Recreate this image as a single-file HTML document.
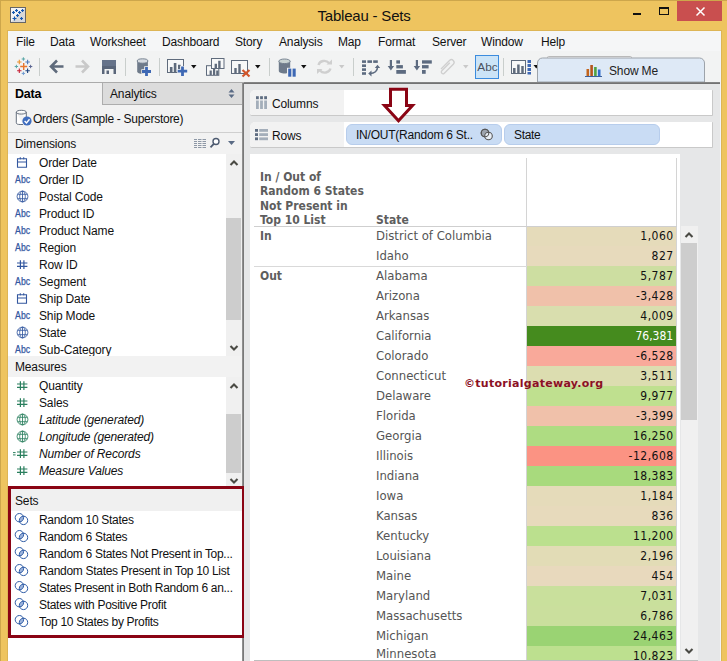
<!DOCTYPE html>
<html><head><meta charset="utf-8"><title>Tableau - Sets</title>
<style>
html,body{margin:0;padding:0;}
body{width:727px;height:661px;overflow:hidden;position:relative;background:#EEC45F;font-family:"Liberation Sans",sans-serif;font-size:12px;color:#1a1a1a;}
.abs,.abs *{position:absolute;}
div,span,svg{position:absolute;box-sizing:border-box;}
.t{white-space:nowrap;line-height:17px;height:17px;}
.ui{font-size:12px;color:#111;letter-spacing:-0.15px;}
.viz{font-family:"DejaVu Sans Condensed","Liberation Sans",sans-serif;}
</style></head>
<body>
<!-- window frame -->
<div id="frame" style="left:0;top:0;width:727px;height:661px;border-left:1px solid #CDA64B;border-top:1px solid #CDA64B;"></div>
<!-- title bar -->
<svg style="left:10px;top:7px" width="16" height="16" viewBox="0 0 16 16"><rect x="0.5" y="0.5" width="15" height="15" fill="#f4f4f4" stroke="#666"/><path d="M15 1 L15 15 L1 15 Z" fill="#d8d8d8"/><g stroke="#1558b0" stroke-width="1.2"><path d="M6.5 2v3M5 3.500h3M12.500 2v3M11 3.500h3M3.500 4v3M2 5.500h3M9.500 4v3M8 5.500h3M7.500 7v3M6 8.500h3M4.500 9.500v4M2.500 11.500h4M11.500 10v3M10 11.500h3"/></g></svg>
<span class="t" style="left:264px;top:7px;width:200px;text-align:center;font-size:15px;color:#111;letter-spacing:-0.2px;">Tableau - Sets</span>
<div style="left:633px;top:13px;width:8px;height:2px;background:#111"></div>
<div style="left:659px;top:7px;width:10px;height:8px;border:1px solid #111;border-top-width:2px"></div>
<div style="left:677px;top:1px;width:45px;height:20px;background:#C94F4F"></div>
<svg style="left:695px;top:6px" width="11" height="11" viewBox="0 0 11 11"><path d="M1.500 1.500L9.500 9.500M9.500 1.500L1.500 9.500" stroke="#fff" stroke-width="1.500"/></svg>

<!-- client area -->
<div id="client" style="left:7px;top:30px;width:715px;height:631px;background:#F2F4F8;border:1px solid #DDB556;border-bottom:none;"></div>
<!-- menu bar -->
<div id="menubar" style="left:8px;top:31px;width:712px;height:20px;background:#F5F6F7;"></div>
<span class="t ui" style="left:16px;top:34px">File</span>
<span class="t ui" style="left:50px;top:34px">Data</span>
<span class="t ui" style="left:90px;top:34px">Worksheet</span>
<span class="t ui" style="left:162px;top:34px">Dashboard</span>
<span class="t ui" style="left:235px;top:34px">Story</span>
<span class="t ui" style="left:279px;top:34px">Analysis</span>
<span class="t ui" style="left:338px;top:34px">Map</span>
<span class="t ui" style="left:378px;top:34px">Format</span>
<span class="t ui" style="left:432px;top:34px">Server</span>
<span class="t ui" style="left:481px;top:34px">Window</span>
<span class="t ui" style="left:541px;top:34px">Help</span>
<!-- toolbar -->
<div id="toolbar" style="left:8px;top:51px;width:712px;height:31px;background:#F2F3F3;"></div>
<!--TB-START--><svg id="tbicons" style="left:8px;top:51px" width="713" height="31" viewBox="8 51 713 31">
<!-- logo -->
<g fill="none">
<path d="M23.700 63v7M20.200 66.500h7" stroke="#E8762C" stroke-width="1.400"/>
<path d="M23.400 57.300v3.400M21.700 59h3.400" stroke="#59A6A6" stroke-width="1"/>
<path d="M23.400 71.700v3.400M21.700 73.400h3.400" stroke="#6F9BD1" stroke-width="1"/>
<path d="M16.400 64.800v3.400M14.700 66.500h3.400" stroke="#59A6A6" stroke-width="1"/>
<path d="M30.600 64.800v3.400M28.900 66.500h3.400" stroke="#5C6692" stroke-width="1"/>
<path d="M19.300 59.800v4.400M17.100 62h4.400" stroke="#EB912C" stroke-width="1.100"/>
<path d="M27.600 59.800v4.400M25.400 62h4.400" stroke="#4E79B8" stroke-width="1.100"/>
<path d="M19.300 68.500v4.400M17.100 70.700h4.400" stroke="#C72035" stroke-width="1.100"/>
<path d="M27.600 68.500v4.400M25.400 70.700h4.400" stroke="#1F447E" stroke-width="1.100"/>
</g>
<g stroke="#C9CECC" stroke-width="1">
<path d="M39.500 58v18M125.500 58v18M159.500 58v18M269.500 58v18M353.500 58v18M503.500 58v18"/>
</g>
<!-- back / forward -->
<path d="M63.500 66.500H52M57 60.500L51 66.500L57 72.500" stroke="#5F6B7C" stroke-width="2.600" fill="none" stroke-linejoin="miter"/>
<path d="M75.500 66.500H87M82 60.500L88 66.500L82 72.500" stroke="#C9C9C9" stroke-width="2.600" fill="none"/>
<!-- save -->
<rect x="102" y="60" width="14" height="14" fill="#5A667A"/>
<rect x="102" y="60" width="14" height="6" fill="#66738A"/>
<rect x="104.500" y="69" width="9" height="5" fill="#F2F3F3"/>
<rect x="106.500" y="70.500" width="2.500" height="3.500" fill="#5A667A"/>
<!-- db plus -->
<path d="M137.200 61v10.500c0 1.400 2.400 2.300 5.350 2.300s5.350 -0.900 5.350 -2.300v-10.500z" fill="#6E7A8A"/>
<ellipse cx="142.550" cy="61" rx="5.350" ry="2.200" fill="#D5DAE0" stroke="#6E7A8A" stroke-width="0.900"/>
<path d="M146.500 66.300v10.400M141.300 71.500h10.400" stroke="#F2F3F3" stroke-width="4.600" fill="none"/>
<path d="M146.500 67v9M142 71.500h9" stroke="#3E68B4" stroke-width="2.800" fill="none"/>
<!-- new worksheet -->
<rect x="167.500" y="59.500" width="16" height="13" fill="#F7F8F8" stroke="#5F6B7C"/>
<path d="M171.200 72v-5M175.100 72v-9M179.300 72v-7.300" stroke="#5F6B7C" stroke-width="2.600"/>
<path d="M182.500 66v10.500M177.200 71.200h10.500" stroke="#F2F3F3" stroke-width="4.600" fill="none"/>
<path d="M182.500 66.500v9.500M177.700 71.200h9.500" stroke="#3E68B4" stroke-width="2.800" fill="none"/>
<path d="M191 65h5.500l-2.750 3.500z" fill="#111"/>
<!-- duplicate -->
<rect x="206.500" y="65.700" width="12.300" height="9.600" fill="#F7F8F8" stroke="#5F6B7C"/>
<path d="M210.700 75v-4.500M214.100 75v-6M217.300 75v-4.500" stroke="#5F6B7C" stroke-width="2.200"/>
<rect x="211.500" y="58.500" width="12.500" height="10" fill="#F7F8F8" stroke="#5F6B7C"/>
<path d="M215.800 68v-4.200M219.400 68v-7.200" stroke="#5F6B7C" stroke-width="2.400"/>
<!-- clear -->
<rect x="231.500" y="60.500" width="16" height="13" fill="#F7F8F8" stroke="#5F6B7C"/>
<path d="M235.500 73v-5M239.500 73v-9" stroke="#5F6B7C" stroke-width="2.400"/>
<path d="M242.500 70l7 6.500M249.500 70l-7 6.500" stroke="#D2562B" stroke-width="2.200"/>
<path d="M255 65h5.500l-2.750 3.500z" fill="#111"/>
<!-- db pause -->
<path d="M278.800 61.300v9.700c0 1.500 2.600 2.500 5.700 2.500s5.700 -1 5.700 -2.500v-9.700z" fill="#6E7A8A"/>
<ellipse cx="284.500" cy="61.300" rx="5.700" ry="2.300" fill="#C9D3D2" stroke="#6E7A8A" stroke-width="0.900"/>
<rect x="287" y="67.800" width="9.500" height="9.500" fill="#F2F3F3"/>
<rect x="288.200" y="68.600" width="3.100" height="8.100" fill="#3E68B4"/><rect x="292.600" y="68.600" width="3.100" height="8.100" fill="#3E68B4"/>
<path d="M301 65h5.500l-2.750 3.500z" fill="#111"/>
<!-- refresh (disabled) -->
<g stroke="#CFCFCF" stroke-width="2.400" fill="none">
<path d="M318.500 65a6 5.500 0 0 1 10.500 -2"/><path d="M330.500 68.500a6 5.500 0 0 1 -10.500 2"/>
</g>
<path d="M326.500 64.500h5.500v-5z" fill="#CFCFCF"/><path d="M322.500 69h-5.500v5z" fill="#CFCFCF"/>
<path d="M339 65h5.500l-2.750 3.500z" fill="#C9C9C9"/>
<!-- swap -->
<g fill="#5D6B80">
<rect x="362" y="60.300" width="4" height="2.600"/><rect x="367.400" y="60.300" width="4.600" height="2.600"/><rect x="373.200" y="60.300" width="4.600" height="2.600"/>
<rect x="362" y="64.400" width="4" height="2.600"/><rect x="362" y="68.300" width="4" height="2.600"/><rect x="362" y="72.200" width="4" height="2.600"/>
</g>
<path d="M370 73.500c4.500 0 7.500 -2.500 7.500 -6.500" stroke="#5D6B80" stroke-width="1.600" fill="none"/>
<path d="M371.500 70.500l-3.300 3l3.300 3z M374.800 68l2.700 -3.300l2.700 3.300z" fill="#5D6B80"/>
<!-- sort asc -->
<g fill="#5D6B80">
<path d="M389.800 60h2.200v6h2.100l-3.200 4.500l-3.200 -4.500h2.100z"/>
<rect x="396.300" y="60.300" width="3.700" height="3.300"/><rect x="396.300" y="65.100" width="6.600" height="3.300"/><rect x="396.300" y="70" width="9.600" height="3.800"/>
<path d="M415.800 60h2.200v6h2.100l-3.200 4.500l-3.200 -4.500h2.100z"/>
<rect x="422" y="60.300" width="9.800" height="3.300"/><rect x="422" y="65.100" width="6.600" height="3.300"/><rect x="422" y="70" width="3.700" height="3.800"/>
</g>
<!-- paperclip (disabled) -->
<path d="M441 71.500l8.500 -8.500a2.600 2.600 0 0 1 3.800 3.700l-9 9a1.700 1.700 0 0 1 -2.500 -2.400l8 -8" stroke="#CFCFCF" stroke-width="1.300" fill="none" transform="translate(0,-2.500)"/>
<path d="M463 65h5.500l-2.750 3.500z" fill="#C9C9C9"/>
<!-- Abc button -->
<rect x="475.500" y="55.500" width="23" height="23" fill="#CCE4F7" stroke="#3C8CDE"/>
<text x="487.500" y="70.800" text-anchor="middle" font-family="Liberation Sans, sans-serif" font-size="11.800" fill="#4A525E">Abc</text>
<!-- chart icon -->
<rect x="511.500" y="60.500" width="14" height="13" fill="#F7F8F8" stroke="#5F6B7C"/>
<path d="M514.300 73v-5M518.400 73v-8.500M522.500 73v-7" stroke="#5F6B7C" stroke-width="2.500"/>
<g fill="#3E68B4"><rect x="527.500" y="60" width="3.500" height="3"/><rect x="527.500" y="64" width="3.500" height="3"/><rect x="527.500" y="68" width="3.500" height="3"/><rect x="527.500" y="72" width="3.500" height="2.500"/></g>
<path d="M533.500 65h5.500l-2.750 3.500z" fill="#111"/>
<!-- hidden tab behind show me -->
<path d="M547.500 60v-2.500a1 1 0 0 1 1 -1h82a1 1 0 0 1 1 1v2.500" fill="#F7F7F7" stroke="#B9B9B9"/>
<!-- Show Me -->
<path d="M537.500 82v-19a5 5 0 0 1 5 -5h157a5 5 0 0 1 5 5v19z" fill="#DEE9F6" stroke="#9DA3AA"/>
<g><rect x="586.500" y="69" width="2.600" height="7" fill="#C2641C"/><rect x="590.300" y="65" width="2.600" height="11" fill="#B5551C"/><rect x="594.100" y="67" width="2.600" height="9" fill="#4FA243"/><rect x="597.900" y="69.500" width="2.600" height="6.500" fill="#2F6DCB"/><rect x="585" y="76" width="17" height="1" fill="#3B5F9B"/></g>
<text x="609" y="74.700" font-family="Liberation Sans, sans-serif" font-size="12" fill="#222" letter-spacing="-0.15">Show Me</text>
</svg>
<!--TB-END-->
<!--LP-START--><div id="leftpanel" style="left:8px;top:83px;width:234px;height:578px;background:#F2F2F2;"></div>
<div style="left:8px;top:82px;width:236px;height:1px;background:#ABABAB;"></div>
<div style="left:102px;top:83px;width:140px;height:22px;background:#DCDCDC;border-left:1px solid #ADADAD;border-bottom:1px solid #ADADAD;"></div>
<span class="t" style="left:15px;top:86px;font-weight:bold;font-size:12.500px;color:#000;letter-spacing:-0.200px;">Data</span>
<span class="t ui" style="left:110px;top:86px;">Analytics</span>
<svg style="left:227px;top:88px" width="9" height="11" viewBox="0 0 9 11"><path d="M1.500 4.500h6l-3 -3.500zM1.500 6.500h6l-3 3.500z" fill="#5A6B85"/></svg>
<svg style="left:15px;top:109px" width="19" height="18" viewBox="0 0 19 18"><path d="M1.300 3.200v10.600c0 1.100 1.200 1.700 3.800 1.700h3M1.300 3.200c0 -1.200 2.200 -1.900 5 -1.900s5 0.700 5 1.900v5M1.300 3.200c0 1.200 2.200 1.900 5 1.900s5 -0.700 5 -1.900" fill="#fff" stroke="#66707E" stroke-width="1"/><circle cx="12" cy="12" r="4.600" fill="#3F6DBE"/><path d="M9.600 12l1.900 1.900l3 -3.600" stroke="#fff" stroke-width="1.400" fill="none"/></svg>
<span class="t ui" style="left:33px;top:111px;letter-spacing:-0.280px;">Orders (Sample - Superstore)</span>
<div style="left:8px;top:132px;width:234px;height:1px;background:#CFCFCF;"></div>
<span class="t ui" style="left:15px;top:136px;">Dimensions</span>
<svg style="left:193px;top:138px" width="14" height="11" viewBox="0 0 14 11"><g stroke="#8E98A6" stroke-width="1"><path d="M1 1.500h3M5 1.500h3.500M9.500 1.500h3.500M1 3.500h3M5 3.500h3.500M9.500 3.500h3.500M1 5.500h3M5 5.500h3.500M9.500 5.500h3.500M1 7.500h3M5 7.500h3.500M9.500 7.500h3.500M1 9.500h3M5 9.500h3.500M9.500 9.500h3.500"/></g></svg>
<svg style="left:209px;top:137px" width="12" height="12" viewBox="0 0 12 12"><circle cx="7" cy="4.500" r="3" fill="#fff" stroke="#4D5A70" stroke-width="1.400"/><path d="M4.800 6.800l-3.300 3.500" stroke="#4D5A70" stroke-width="1.800"/></svg>
<svg style="left:227px;top:140px" width="9" height="6" viewBox="0 0 9 6"><path d="M1 1h7l-3.500 4z" fill="#5A6B85"/></svg>
<div style="left:8px;top:154px;width:218px;height:202px;background:#fff;overflow:hidden;"></div>
<div style="left:226px;top:154px;width:16px;height:202px;background:#F0F0F0;"></div>
<div style="left:226px;top:218px;width:15px;height:102px;background:#CDCDCD;"></div>
<svg style="left:229px;top:159px" width="10" height="8" viewBox="0 0 10 8"><path d="M1.500 6L5 2.500L8.500 6" fill="none" stroke="#4A4A44" stroke-width="2.100"/></svg>
<svg style="left:229px;top:344px" width="10" height="8" viewBox="0 0 10 8"><path d="M1.500 2L5 5.500L8.500 2" fill="none" stroke="#4A4A44" stroke-width="2.100"/></svg>
<div id="dimclip" style="left:8px;top:154px;width:218px;height:202px;overflow:hidden;"><div style="left:-8px;top:-154px;width:1px;height:1px;">
<svg style="left:16px;top:157px" width="12" height="12" viewBox="0 0 12 12"><path d="M1.500 1.800h9v8.400h-9zM1.500 5h9M4.300 0.300v2.200M7.700 0.300v2.200" fill="none" stroke="#33579F" stroke-width="1.100"/></svg>
<span class="t ui li" style="left:39px;top:155px;">Order Date</span>
<svg style="left:14px;top:172px" width="18" height="17" viewBox="0 0 18 17"><text x="1.100" y="10.800" font-family="Liberation Sans, sans-serif" font-size="10" textLength="15" lengthAdjust="spacingAndGlyphs" fill="#33579F" stroke="#33579F" stroke-width="0.250">Abc</text></svg>
<span class="t ui li" style="left:39px;top:172px;">Order ID</span>
<svg style="left:16px;top:190px" width="13" height="13" viewBox="0 0 13 13"><g fill="none" stroke="#33579F" stroke-width="0.850"><circle cx="6.500" cy="6.500" r="5.400"/><ellipse cx="6.500" cy="6.500" rx="2.800" ry="5.400"/><path d="M6.500 1.100v10.800M1.600 4.300h9.800M1.600 8.700h9.800"/></g></svg>
<span class="t ui li" style="left:39px;top:189px;">Postal Code</span>
<svg style="left:14px;top:206px" width="18" height="17" viewBox="0 0 18 17"><text x="1.100" y="10.800" font-family="Liberation Sans, sans-serif" font-size="10" textLength="15" lengthAdjust="spacingAndGlyphs" fill="#33579F" stroke="#33579F" stroke-width="0.250">Abc</text></svg>
<span class="t ui li" style="left:39px;top:206px;">Product ID</span>
<svg style="left:14px;top:223px" width="18" height="17" viewBox="0 0 18 17"><text x="1.100" y="10.800" font-family="Liberation Sans, sans-serif" font-size="10" textLength="15" lengthAdjust="spacingAndGlyphs" fill="#33579F" stroke="#33579F" stroke-width="0.250">Abc</text></svg>
<span class="t ui li" style="left:39px;top:223px;">Product Name</span>
<svg style="left:14px;top:240px" width="18" height="17" viewBox="0 0 18 17"><text x="1.100" y="10.800" font-family="Liberation Sans, sans-serif" font-size="10" textLength="15" lengthAdjust="spacingAndGlyphs" fill="#33579F" stroke="#33579F" stroke-width="0.250">Abc</text></svg>
<span class="t ui li" style="left:39px;top:240px;">Region</span>
<svg style="left:12px;top:260px" width="17" height="12" viewBox="0 0 17 12"><g fill="none" stroke="#33579F" stroke-width="1.200"><path d="M8.400 0.300v8.800M11.900 0.300v8.800M5 3h10.400M5 6.300h10.400"/></g></svg>
<span class="t ui li" style="left:39px;top:257px;">Row ID</span>
<svg style="left:14px;top:274px" width="18" height="17" viewBox="0 0 18 17"><text x="1.100" y="10.800" font-family="Liberation Sans, sans-serif" font-size="10" textLength="15" lengthAdjust="spacingAndGlyphs" fill="#33579F" stroke="#33579F" stroke-width="0.250">Abc</text></svg>
<span class="t ui li" style="left:39px;top:274px;">Segment</span>
<svg style="left:16px;top:293px" width="12" height="12" viewBox="0 0 12 12"><path d="M1.500 1.800h9v8.400h-9zM1.500 5h9M4.300 0.300v2.200M7.700 0.300v2.200" fill="none" stroke="#33579F" stroke-width="1.100"/></svg>
<span class="t ui li" style="left:39px;top:291px;">Ship Date</span>
<svg style="left:14px;top:308px" width="18" height="17" viewBox="0 0 18 17"><text x="1.100" y="10.800" font-family="Liberation Sans, sans-serif" font-size="10" textLength="15" lengthAdjust="spacingAndGlyphs" fill="#33579F" stroke="#33579F" stroke-width="0.250">Abc</text></svg>
<span class="t ui li" style="left:39px;top:308px;">Ship Mode</span>
<svg style="left:16px;top:326px" width="13" height="13" viewBox="0 0 13 13"><g fill="none" stroke="#33579F" stroke-width="0.850"><circle cx="6.500" cy="6.500" r="5.400"/><ellipse cx="6.500" cy="6.500" rx="2.800" ry="5.400"/><path d="M6.500 1.100v10.800M1.600 4.300h9.800M1.600 8.700h9.800"/></g></svg>
<span class="t ui li" style="left:39px;top:325px;">State</span>
<svg style="left:14px;top:342px" width="18" height="17" viewBox="0 0 18 17"><text x="1.100" y="10.800" font-family="Liberation Sans, sans-serif" font-size="10" textLength="15" lengthAdjust="spacingAndGlyphs" fill="#33579F" stroke="#33579F" stroke-width="0.250">Abc</text></svg>
<span class="t ui li" style="left:39px;top:342px;">Sub-Category</span>
</div></div>
<span class="t ui" style="left:15px;top:359px;">Measures</span>
<div style="left:8px;top:377px;width:218px;height:109px;background:#fff;overflow:hidden;"></div>
<div style="left:226px;top:377px;width:16px;height:109px;background:#F0F0F0;"></div>
<div style="left:226px;top:414px;width:15px;height:59px;background:#CDCDCD;"></div>
<svg style="left:229px;top:382px" width="10" height="8" viewBox="0 0 10 8"><path d="M1.500 6L5 2.500L8.500 6" fill="none" stroke="#4A4A44" stroke-width="2.100"/></svg>
<svg style="left:229px;top:477px" width="10" height="8" viewBox="0 0 10 8"><path d="M1.500 2L5 5.500L8.500 2" fill="none" stroke="#4A4A44" stroke-width="2.100"/></svg>
<svg style="left:12px;top:381px" width="17" height="12" viewBox="0 0 17 12"><g fill="none" stroke="#2A7F5E" stroke-width="1.200"><path d="M8.400 0.300v8.800M11.900 0.300v8.800M5 3h10.400M5 6.300h10.400"/></g></svg>
<span class="t ui li" style="left:39px;top:378px;">Quantity</span>
<svg style="left:12px;top:398px" width="17" height="12" viewBox="0 0 17 12"><g fill="none" stroke="#2A7F5E" stroke-width="1.200"><path d="M8.400 0.300v8.800M11.900 0.300v8.800M5 3h10.400M5 6.300h10.400"/></g></svg>
<span class="t ui li" style="left:39px;top:395px;">Sales</span>
<svg style="left:16px;top:413px" width="13" height="13" viewBox="0 0 13 13"><g fill="none" stroke="#2A7F5E" stroke-width="0.850"><circle cx="6.500" cy="6.500" r="5.400"/><ellipse cx="6.500" cy="6.500" rx="2.800" ry="5.400"/><path d="M6.500 1.100v10.800M1.600 4.300h9.800M1.600 8.700h9.800"/></g></svg>
<span class="t ui li" style="left:39px;top:412px;font-style:italic;">Latitude (generated)</span>
<svg style="left:16px;top:430px" width="13" height="13" viewBox="0 0 13 13"><g fill="none" stroke="#2A7F5E" stroke-width="0.850"><circle cx="6.500" cy="6.500" r="5.400"/><ellipse cx="6.500" cy="6.500" rx="2.800" ry="5.400"/><path d="M6.500 1.100v10.800M1.600 4.300h9.800M1.600 8.700h9.800"/></g></svg>
<span class="t ui li" style="left:39px;top:429px;font-style:italic;">Longitude (generated)</span>
<svg style="left:12px;top:449px" width="17" height="12" viewBox="0 0 17 12"><g fill="none" stroke="#2A7F5E" stroke-width="1.200"><path d="M8.400 0.300v8.800M11.900 0.300v8.800M5 3h10.400M5 6.300h10.400"/><path d="M1 3.600h2.600M1 5.900h2.600" stroke-width="1"/></g></svg>
<span class="t ui li" style="left:39px;top:446px;font-style:italic;">Number of Records</span>
<svg style="left:12px;top:466px" width="17" height="12" viewBox="0 0 17 12"><g fill="none" stroke="#2A7F5E" stroke-width="1.200"><path d="M8.400 0.300v8.800M11.900 0.300v8.800M5 3h10.400M5 6.300h10.400"/></g></svg>
<span class="t ui li" style="left:39px;top:463px;font-style:italic;">Measure Values</span>
<div style="left:8px;top:486px;width:234px;height:175px;background:#fff;"></div>
<div style="left:11px;top:489px;width:231px;height:22px;background:#F0F0F0;"></div>
<span class="t ui" style="left:15px;top:493px;">Sets</span>
<svg style="left:14px;top:513px" width="16" height="14" viewBox="0 0 16 14"><defs><clipPath id="cl512"><circle cx="5.400" cy="4.700" r="4.200"/></clipPath></defs><circle cx="9.500" cy="7.400" r="4.200" fill="#9DB4DC" clip-path="url(#cl512)"/><g fill="none" stroke="#2F5CA6" stroke-width="1"><circle cx="5.400" cy="4.700" r="4.200"/><circle cx="9.500" cy="7.400" r="4.200"/></g></svg>
<span class="t ui li" style="left:39px;top:512px;letter-spacing:-0.300px;">Random 10 States</span>
<svg style="left:14px;top:530px" width="16" height="14" viewBox="0 0 16 14"><defs><clipPath id="cl529"><circle cx="5.400" cy="4.700" r="4.200"/></clipPath></defs><circle cx="9.500" cy="7.400" r="4.200" fill="#9DB4DC" clip-path="url(#cl529)"/><g fill="none" stroke="#2F5CA6" stroke-width="1"><circle cx="5.400" cy="4.700" r="4.200"/><circle cx="9.500" cy="7.400" r="4.200"/></g></svg>
<span class="t ui li" style="left:39px;top:529px;letter-spacing:-0.300px;">Random 6 States</span>
<svg style="left:14px;top:547px" width="16" height="14" viewBox="0 0 16 14"><defs><clipPath id="cl546"><circle cx="5.400" cy="4.700" r="4.200"/></clipPath></defs><circle cx="9.500" cy="7.400" r="4.200" fill="#9DB4DC" clip-path="url(#cl546)"/><g fill="none" stroke="#2F5CA6" stroke-width="1"><circle cx="5.400" cy="4.700" r="4.200"/><circle cx="9.500" cy="7.400" r="4.200"/></g></svg>
<span class="t ui li" style="left:39px;top:546px;letter-spacing:-0.300px;">Random 6 States Not Present in Top...</span>
<svg style="left:14px;top:564px" width="16" height="14" viewBox="0 0 16 14"><defs><clipPath id="cl563"><circle cx="5.400" cy="4.700" r="4.200"/></clipPath></defs><circle cx="9.500" cy="7.400" r="4.200" fill="#9DB4DC" clip-path="url(#cl563)"/><g fill="none" stroke="#2F5CA6" stroke-width="1"><circle cx="5.400" cy="4.700" r="4.200"/><circle cx="9.500" cy="7.400" r="4.200"/></g></svg>
<span class="t ui li" style="left:39px;top:563px;letter-spacing:-0.300px;">Random States Present in Top 10 List</span>
<svg style="left:14px;top:581px" width="16" height="14" viewBox="0 0 16 14"><defs><clipPath id="cl580"><circle cx="5.400" cy="4.700" r="4.200"/></clipPath></defs><circle cx="9.500" cy="7.400" r="4.200" fill="#9DB4DC" clip-path="url(#cl580)"/><g fill="none" stroke="#2F5CA6" stroke-width="1"><circle cx="5.400" cy="4.700" r="4.200"/><circle cx="9.500" cy="7.400" r="4.200"/></g></svg>
<span class="t ui li" style="left:39px;top:580px;letter-spacing:-0.300px;">States Present in Both Random 6 an...</span>
<svg style="left:14px;top:598px" width="16" height="14" viewBox="0 0 16 14"><defs><clipPath id="cl597"><circle cx="5.400" cy="4.700" r="4.200"/></clipPath></defs><circle cx="9.500" cy="7.400" r="4.200" fill="#9DB4DC" clip-path="url(#cl597)"/><g fill="none" stroke="#2F5CA6" stroke-width="1"><circle cx="5.400" cy="4.700" r="4.200"/><circle cx="9.500" cy="7.400" r="4.200"/></g></svg>
<span class="t ui li" style="left:39px;top:597px;letter-spacing:-0.300px;">States with Positive Profit</span>
<svg style="left:14px;top:615px" width="16" height="14" viewBox="0 0 16 14"><defs><clipPath id="cl614"><circle cx="5.400" cy="4.700" r="4.200"/></clipPath></defs><circle cx="9.500" cy="7.400" r="4.200" fill="#9DB4DC" clip-path="url(#cl614)"/><g fill="none" stroke="#2F5CA6" stroke-width="1"><circle cx="5.400" cy="4.700" r="4.200"/><circle cx="9.500" cy="7.400" r="4.200"/></g></svg>
<span class="t ui li" style="left:39px;top:614px;letter-spacing:-0.300px;">Top 10 States by Profits</span>
<div style="left:242px;top:83px;width:2px;height:578px;background:linear-gradient(90deg,#9A9A9A,#6E6E6E);"></div>
<div style="left:8px;top:486px;width:237px;height:152px;border:3px solid #8A0414;"></div><!--LP-END-->
<!--MN-START--><div id="mainbg" style="left:244px;top:84px;width:476px;height:577px;background:#E6E7E8;"></div>
<div style="left:244px;top:82px;width:475.500px;height:2px;background:linear-gradient(180deg,#8C8C8C,#6A6A6A);"></div>
<div style="left:250px;top:90px;width:463px;height:26px;background:#C9C9C9;border-radius:5px 1px 1px 2px;"></div>
<div style="left:250px;top:90px;width:462px;height:25px;background:#fff;border-radius:5px 0 0 2px;"></div>
<div style="left:250px;top:90px;width:94px;height:25px;background:#F2F2F2;border-radius:5px 0 0 2px;"></div>
<svg style="left:255px;top:95px" width="13" height="15" viewBox="0 0 13 15"><g fill="#A4AEBA"><rect x="1" y="1.200" width="2.800" height="3" fill="#5E6C80"/><rect x="5.100" y="1.200" width="2.800" height="3" fill="#5E6C80"/><rect x="9.200" y="1.200" width="2.800" height="3" fill="#5E6C80"/><rect x="1" y="5.500" width="2.800" height="8.500"/><rect x="5.100" y="5.500" width="2.800" height="8.500"/><rect x="9.200" y="5.500" width="2.800" height="8.500"/></g></svg>
<span class="t ui" style="left:272px;top:96px;">Columns</span>
<div style="left:250px;top:122px;width:463px;height:26px;background:#C9C9C9;border-radius:5px 1px 1px 2px;"></div>
<div style="left:250px;top:122px;width:462px;height:25px;background:#fff;border-radius:5px 0 0 2px;"></div>
<div style="left:250px;top:122px;width:94px;height:25px;background:#F2F2F2;border-radius:5px 0 0 2px;"></div>
<svg style="left:254px;top:128px" width="15" height="13" viewBox="0 0 15 13"><g fill="#A4AEBA"><rect x="1" y="1" width="3" height="2.800" fill="#5E6C80"/><rect x="1" y="5.200" width="3" height="2.800" fill="#5E6C80"/><rect x="1" y="9.400" width="3" height="2.800" fill="#5E6C80"/><rect x="5.200" y="1" width="8.800" height="2.800"/><rect x="5.200" y="5.200" width="8.800" height="2.800"/><rect x="5.200" y="9.400" width="8.800" height="2.800"/></g></svg>
<span class="t ui" style="left:272px;top:128px;">Rows</span>
<div style="left:346px;top:124px;width:156px;height:21px;background:#C9DCF4;border:1px solid #B7CDEC;border-radius:6px;"></div>
<div style="left:504px;top:124px;width:156px;height:21px;background:#C9DCF4;border:1px solid #B7CDEC;border-radius:6px;"></div>
<span class="t ui" style="left:356px;top:127px;letter-spacing:-0.220px;">IN/OUT(Random 6 St..</span>
<span class="t ui" style="left:514px;top:127px;letter-spacing:-0.350px;">State</span>
<svg style="left:480px;top:128px" width="14" height="13" viewBox="0 0 14 13"><g fill="none" stroke="#555" stroke-width="1.100"><circle cx="5" cy="5" r="3.800" fill="#9DA4AE"/><circle cx="8.500" cy="8" r="3.800" fill="#E8EEF6"/><circle cx="5" cy="5" r="3.800"/></g></svg>
<div id="viz" style="left:250px;top:154px;width:430px;height:507px;background:#fff;"></div>
<div style="left:681px;top:226px;width:17px;height:435px;background:#F0F0F0;"></div>
<div style="left:681px;top:243px;width:16px;height:177px;background:#CDCDCD;"></div>
<svg style="left:684px;top:231px" width="10" height="8" viewBox="0 0 10 8"><path d="M1.500 6L5 2.500L8.500 6" fill="none" stroke="#4A4A44" stroke-width="2.100"/></svg>
<svg style="left:684px;top:647px" width="10" height="8" viewBox="0 0 10 8"><path d="M1.500 2L5 5.500L8.500 2" fill="none" stroke="#4A4A44" stroke-width="2.100"/></svg>
<div style="left:526px;top:158px;width:1px;height:503px;background:#D4D4D4;"></div>
<div style="left:676px;top:158px;width:1px;height:503px;background:#D4D4D4;"></div>
<span class="t viz" style="left:260px;top:170.0px;font-weight:bold;font-size:12px;color:#5E5E5E;line-height:15px;height:15px;">In / Out of</span>
<span class="t viz" style="left:260px;top:184.3px;font-weight:bold;font-size:12px;color:#5E5E5E;line-height:15px;height:15px;">Random 6 States</span>
<span class="t viz" style="left:260px;top:198.6px;font-weight:bold;font-size:12px;color:#5E5E5E;line-height:15px;height:15px;">Not Present in</span>
<span class="t viz" style="left:260px;top:212.9px;font-weight:bold;font-size:12px;color:#5E5E5E;line-height:15px;height:15px;">Top 10 List</span>
<span class="t viz" style="left:376px;top:212.900px;font-weight:bold;font-size:12px;color:#5E5E5E;line-height:15px;height:15px;">State</span>
<div style="left:527px;top:226px;width:149px;height:20px;background:#E5DBBA;"></div>
<span class="t viz" style="left:376px;top:227px;font-size:13px;color:#555;line-height:18px;height:18px;">District of Columbia</span>
<span class="t viz" style="left:573px;width:100.7px;text-align:right;top:227px;font-size:12px;letter-spacing:0.5px;color:#111;line-height:18px;height:18px;">1,060</span>
<div style="left:527px;top:246px;width:149px;height:20px;background:#E7DABC;"></div>
<span class="t viz" style="left:376px;top:247px;font-size:13px;color:#555;line-height:18px;height:18px;">Idaho</span>
<span class="t viz" style="left:573px;width:100.7px;text-align:right;top:247px;font-size:12px;letter-spacing:0.5px;color:#111;line-height:18px;height:18px;">827</span>
<div style="left:527px;top:266px;width:149px;height:20px;background:#CDDEA1;"></div>
<span class="t viz" style="left:376px;top:267px;font-size:13px;color:#555;line-height:18px;height:18px;">Alabama</span>
<span class="t viz" style="left:573px;width:100.7px;text-align:right;top:267px;font-size:12px;letter-spacing:0.5px;color:#111;line-height:18px;height:18px;">5,787</span>
<div style="left:527px;top:286px;width:149px;height:20px;background:#F0C1AA;"></div>
<span class="t viz" style="left:376px;top:287px;font-size:13px;color:#555;line-height:18px;height:18px;">Arizona</span>
<span class="t viz" style="left:573px;width:100.7px;text-align:right;top:287px;font-size:12px;letter-spacing:0.5px;color:#111;line-height:18px;height:18px;">-3,428</span>
<div style="left:527px;top:306px;width:149px;height:20px;background:#D9DEAE;"></div>
<span class="t viz" style="left:376px;top:307px;font-size:13px;color:#555;line-height:18px;height:18px;">Arkansas</span>
<span class="t viz" style="left:573px;width:100.7px;text-align:right;top:307px;font-size:12px;letter-spacing:0.5px;color:#111;line-height:18px;height:18px;">4,009</span>
<div style="left:527px;top:326px;width:149px;height:20px;background:#458B1E;"></div>
<span class="t viz" style="left:376px;top:327px;font-size:13px;color:#555;line-height:18px;height:18px;">California</span>
<span class="t viz" style="left:573px;width:100.2px;text-align:right;top:327px;font-size:12px;letter-spacing:0px;color:#fff;line-height:18px;height:18px;">76,381</span>
<div style="left:527px;top:346px;width:149px;height:20px;background:#F9A99A;"></div>
<span class="t viz" style="left:376px;top:347px;font-size:13px;color:#555;line-height:18px;height:18px;">Colorado</span>
<span class="t viz" style="left:573px;width:100.7px;text-align:right;top:347px;font-size:12px;letter-spacing:0.5px;color:#111;line-height:18px;height:18px;">-6,528</span>
<div style="left:527px;top:366px;width:149px;height:20px;background:#DCDDB0;"></div>
<span class="t viz" style="left:376px;top:367px;font-size:13px;color:#555;line-height:18px;height:18px;">Connecticut</span>
<span class="t viz" style="left:573px;width:100.7px;text-align:right;top:367px;font-size:12px;letter-spacing:0.5px;color:#111;line-height:18px;height:18px;">3,511</span>
<div style="left:527px;top:386px;width:149px;height:20px;background:#BFE08F;"></div>
<span class="t viz" style="left:376px;top:387px;font-size:13px;color:#555;line-height:18px;height:18px;">Delaware</span>
<span class="t viz" style="left:573px;width:100.7px;text-align:right;top:387px;font-size:12px;letter-spacing:0.5px;color:#111;line-height:18px;height:18px;">9,977</span>
<div style="left:527px;top:406px;width:149px;height:20px;background:#F0C1AA;"></div>
<span class="t viz" style="left:376px;top:407px;font-size:13px;color:#555;line-height:18px;height:18px;">Florida</span>
<span class="t viz" style="left:573px;width:100.7px;text-align:right;top:407px;font-size:12px;letter-spacing:0.5px;color:#111;line-height:18px;height:18px;">-3,399</span>
<div style="left:527px;top:426px;width:149px;height:20px;background:#AEDC82;"></div>
<span class="t viz" style="left:376px;top:427px;font-size:13px;color:#555;line-height:18px;height:18px;">Georgia</span>
<span class="t viz" style="left:573px;width:100.7px;text-align:right;top:427px;font-size:12px;letter-spacing:0.5px;color:#111;line-height:18px;height:18px;">16,250</span>
<div style="left:527px;top:446px;width:149px;height:20px;background:#FB9383;"></div>
<span class="t viz" style="left:376px;top:447px;font-size:13px;color:#555;line-height:18px;height:18px;">Illinois</span>
<span class="t viz" style="left:573px;width:100.7px;text-align:right;top:447px;font-size:12px;letter-spacing:0.5px;color:#111;line-height:18px;height:18px;">-12,608</span>
<div style="left:527px;top:466px;width:149px;height:20px;background:#A8DA7D;"></div>
<span class="t viz" style="left:376px;top:467px;font-size:13px;color:#555;line-height:18px;height:18px;">Indiana</span>
<span class="t viz" style="left:573px;width:100.7px;text-align:right;top:467px;font-size:12px;letter-spacing:0.5px;color:#111;line-height:18px;height:18px;">18,383</span>
<div style="left:527px;top:486px;width:149px;height:20px;background:#E5DBBA;"></div>
<span class="t viz" style="left:376px;top:487px;font-size:13px;color:#555;line-height:18px;height:18px;">Iowa</span>
<span class="t viz" style="left:573px;width:100.7px;text-align:right;top:487px;font-size:12px;letter-spacing:0.5px;color:#111;line-height:18px;height:18px;">1,184</span>
<div style="left:527px;top:506px;width:149px;height:20px;background:#E7DABC;"></div>
<span class="t viz" style="left:376px;top:507px;font-size:13px;color:#555;line-height:18px;height:18px;">Kansas</span>
<span class="t viz" style="left:573px;width:100.7px;text-align:right;top:507px;font-size:12px;letter-spacing:0.5px;color:#111;line-height:18px;height:18px;">836</span>
<div style="left:527px;top:526px;width:149px;height:20px;background:#BBE08E;"></div>
<span class="t viz" style="left:376px;top:527px;font-size:13px;color:#555;line-height:18px;height:18px;">Kentucky</span>
<span class="t viz" style="left:573px;width:100.7px;text-align:right;top:527px;font-size:12px;letter-spacing:0.5px;color:#111;line-height:18px;height:18px;">11,200</span>
<div style="left:527px;top:546px;width:149px;height:20px;background:#E2DCB6;"></div>
<span class="t viz" style="left:376px;top:547px;font-size:13px;color:#555;line-height:18px;height:18px;">Louisiana</span>
<span class="t viz" style="left:573px;width:100.7px;text-align:right;top:547px;font-size:12px;letter-spacing:0.5px;color:#111;line-height:18px;height:18px;">2,196</span>
<div style="left:527px;top:566px;width:149px;height:20px;background:#E8D9BD;"></div>
<span class="t viz" style="left:376px;top:567px;font-size:13px;color:#555;line-height:18px;height:18px;">Maine</span>
<span class="t viz" style="left:573px;width:100.7px;text-align:right;top:567px;font-size:12px;letter-spacing:0.5px;color:#111;line-height:18px;height:18px;">454</span>
<div style="left:527px;top:586px;width:149px;height:20px;background:#C9E09C;"></div>
<span class="t viz" style="left:376px;top:587px;font-size:13px;color:#555;line-height:18px;height:18px;">Maryland</span>
<span class="t viz" style="left:573px;width:100.7px;text-align:right;top:587px;font-size:12px;letter-spacing:0.5px;color:#111;line-height:18px;height:18px;">7,031</span>
<div style="left:527px;top:606px;width:149px;height:20px;background:#CADF9D;"></div>
<span class="t viz" style="left:376px;top:607px;font-size:13px;color:#555;line-height:18px;height:18px;">Massachusetts</span>
<span class="t viz" style="left:573px;width:100.7px;text-align:right;top:607px;font-size:12px;letter-spacing:0.5px;color:#111;line-height:18px;height:18px;">6,786</span>
<div style="left:527px;top:626px;width:149px;height:20px;background:#9AD373;"></div>
<span class="t viz" style="left:376px;top:627px;font-size:13px;color:#555;line-height:18px;height:18px;">Michigan</span>
<span class="t viz" style="left:573px;width:100.7px;text-align:right;top:627px;font-size:12px;letter-spacing:0.5px;color:#111;line-height:18px;height:18px;">24,463</span>
<div style="left:527px;top:646px;width:149px;height:20px;background:#BDE08F;"></div>
<span class="t viz" style="left:376px;top:644.8px;font-size:13px;color:#555;line-height:18px;height:18px;">Minnesota</span>
<span class="t viz" style="left:573px;width:100.7px;text-align:right;top:647px;font-size:12px;letter-spacing:0.5px;color:#111;line-height:18px;height:18px;">10,823</span>
<span class="t viz" style="left:260px;top:226.500px;font-weight:bold;font-size:12px;color:#5E5E5E;line-height:18px;height:18px;">In</span>
<span class="t viz" style="left:260px;top:266.500px;font-weight:bold;font-size:12px;color:#5E5E5E;line-height:18px;height:18px;">Out</span>
<div style="left:254px;top:226px;width:423px;height:1px;background:#CFCFCF;"></div>
<div style="left:254px;top:266px;width:273px;height:1px;background:#D9D9D9;"></div>
<span class="t" style="left:464px;top:374.500px;font-family:'DejaVu Sans','Liberation Sans',sans-serif;font-weight:bold;font-size:11px;color:#8B1024;letter-spacing:0.280px;">©tutorialgateway.org</span>
<div style="left:254px;top:660px;width:444px;height:1px;background:#BEBEBE;"></div>
<svg style="left:376px;top:84px" width="46" height="42" viewBox="376 84 46 42"><path d="M390.500 89.300H406.500V105.500H412.500L398.500 120.800L384.500 105.500H390.500Z" fill="#fff" stroke="#8A0414" stroke-width="3" stroke-linejoin="miter"/></svg><!--MN-END-->
</body></html>
